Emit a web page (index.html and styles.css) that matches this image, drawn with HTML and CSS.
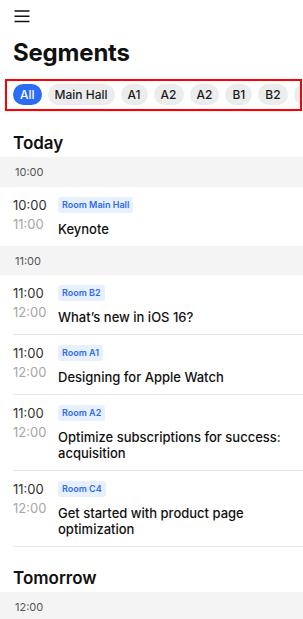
FILE: index.html
```html
<!DOCTYPE html>
<html lang="en">

<head>
    <meta charset="UTF-8">
    <meta name="viewport" content="width=device-width, initial-scale=1.0">
    <title>Segments</title>
    <link rel="stylesheet" href="styles.css">
</head>

<body>
    <header class="topbar">
        <button class="menu" aria-label="Menu">
            <svg width="16" height="13" viewBox="0 0 16 13">
                <path d="M0.5 1h15M0.5 6.25h15M0.5 11.5h15" stroke="#111" stroke-width="1.5" fill="none" />
            </svg>
        </button>
    </header>

    <h1 class="page-title">Segments</h1>

    <div class="segments">
        <div class="chip-row">
            <span class="chip active">All</span>
            <span class="chip">Main Hall</span>
            <span class="chip">A1</span>
            <span class="chip">A2</span>
            <span class="chip">A2</span>
            <span class="chip">B1</span>
            <span class="chip">B2</span>
            <span class="chip">B3</span>
        </div>
    </div>
    <div class="rule"></div>

    <section class="day">
        <h2 class="day-title">Today</h2>

        <div class="slot">10:00</div>
        <ul class="sessions">
            <li class="session">
                <div class="times">
                    <span class="start">10:00</span>
                    <span class="end">11:00</span>
                </div>
                <div class="info">
                    <span class="room">Room Main Hall</span>
                    <p class="name">Keynote</p>
                </div>
            </li>
        </ul>

        <div class="slot">11:00</div>
        <ul class="sessions closed">
            <li class="session">
                <div class="times">
                    <span class="start">11:00</span>
                    <span class="end">12:00</span>
                </div>
                <div class="info">
                    <span class="room">Room B2</span>
                    <p class="name">What’s new in iOS 16?</p>
                </div>
            </li>
            <li class="session">
                <div class="times">
                    <span class="start">11:00</span>
                    <span class="end">12:00</span>
                </div>
                <div class="info">
                    <span class="room">Room A1</span>
                    <p class="name">Designing for Apple Watch</p>
                </div>
            </li>
            <li class="session">
                <div class="times">
                    <span class="start">11:00</span>
                    <span class="end">12:00</span>
                </div>
                <div class="info">
                    <span class="room">Room A2</span>
                    <p class="name">Optimize subscriptions for success: acquisition</p>
                </div>
            </li>
            <li class="session">
                <div class="times">
                    <span class="start">11:00</span>
                    <span class="end">12:00</span>
                </div>
                <div class="info">
                    <span class="room">Room C4</span>
                    <p class="name">Get started with product page optimization</p>
                </div>
            </li>
        </ul>
    </section>

    <section class="day">
        <h2 class="day-title">Tomorrow</h2>
        <div class="slot">12:00</div>
    </section>
</body>

</html>
```

FILE: styles.css
```css
body {
    margin: 0;
    font-family: Inter, "Noto Sans", sans-serif;
    color: #111;
    background-color: #fff;
    overflow-x: hidden;
}

.topbar {
    height: 32px;
    padding-left: 14px;
    display: flex;
    align-items: center;
}

.menu {
    border: none;
    background: none;
    padding: 0;
    width: 17px;
    height: 14px;
    display: flex;
    align-items: center;
}

.page-title {
    margin: 0;
    padding: 6px 13px 0;
    font-size: 24px;
    font-weight: 700;
    line-height: 30px;
    letter-spacing: -0.2px;
}

.segments {
    margin: 11px 1px 0 5px;
    border: 2px solid #ff0000;
    height: 28px;
    overflow: hidden;
}

.chip-row {
    display: flex;
    gap: 6px;
    padding: 3px 0 0 6px;
}

.chip {
    flex: none;
    height: 21px;
    line-height: 21px;
    padding: 0 7px;
    border-radius: 11px;
    background-color: #ececec;
    font-size: 12px;
    font-weight: 500;
    color: #1c1c1c;
}

.chip.active {
    background-color: #2a6cf3;
    color: #fff;
}

.rule {
    height: 1px;
    margin-right: 10px;
    background-color: #f1f1f1;
}

.day-title {
    margin: 0;
    padding: 20px 13px 0;
    height: 25px;
    font-size: 17px;
    font-weight: 600;
    line-height: 22px;
}

.slot {
    height: 29.5px;
    line-height: 31px;
    padding-left: 15px;
    background-color: #f4f4f4;
    font-size: 11px;
    color: #555;
}

.sessions {
    list-style: none;
    margin: 0;
    padding: 0;
}

.session {
    display: flex;
    margin-left: 13px;
    padding: 10px 13px 9px 0;
}

.session + .session {
    border-top: 1px solid #e8e8e8;
}

.sessions.closed .session:last-child {
    border-bottom: 1px solid #e8e8e8;
}

.times {
    width: 45px;
    flex: none;
    display: flex;
    flex-direction: column;
    font-size: 13px;
    line-height: 16px;
}

.start {
    color: #333;
}

.end {
    margin-top: 3px;
    color: #a6a6a6;
}

.info {
    display: flex;
    flex-direction: column;
    align-items: flex-start;
}

.room {
    height: 16px;
    line-height: 16px;
    padding: 0 4px;
    border-radius: 3px;
    background-color: #e9f0fd;
    color: #2a6cf3;
    font-size: 9px;
    font-weight: 600;
}

.name {
    margin: 8px 0 0;
    font-size: 13px;
    font-weight: 500;
    line-height: 16px;
    color: #111;
}
```
